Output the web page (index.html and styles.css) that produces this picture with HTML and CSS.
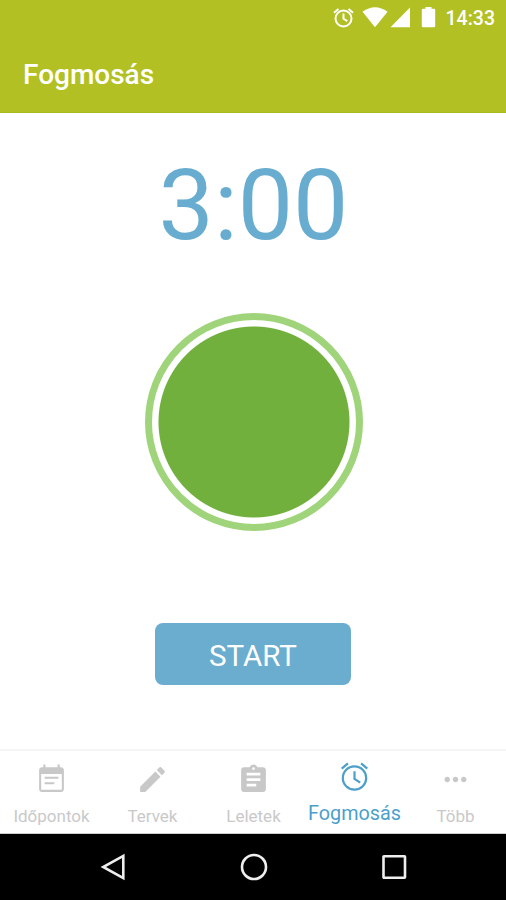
FILE: index.html
```html
<!DOCTYPE html>
<html lang="hu">
<head>
<meta charset="utf-8">
<title>Fogmosás</title>
<link rel="stylesheet" href="styles.css">
</head>
<body>
<div class="screen">
  <header class="header">
    <div class="status">
      <svg class="status-icons" width="104" height="24" viewBox="0 0 104 24" fill="#fff">
        <g fill="none" stroke="#fff" stroke-width="2">
          <circle cx="11.5" cy="12.5" r="8"/>
          <path d="M11.5 7.5v5.3l3.8 2.4M2 6.8l4.5-3.9M21 6.8l-4.5-3.9"/>
        </g>
        <path d="M30.5 5.8Q43 -3.500 55.6 5.8L43 21.2z"/>
        <path d="M78 1.6V21.2H58.5z"/>
        <path d="M91 2.8h2.500V1h6v1.8h2.500q1.200 0 1.200 1.200v16q0 1.200-1.200 1.200H91q-1.200 0-1.200-1.200V4q0-1.200 1.200-1.200z"/>
      </svg>
      <span class="clock">14:33</span>
    </div>
    <h1 class="title">Fogmosás</h1>
  </header>
  <main class="content">
    <div class="timer">3:00</div>
    <div class="ring"></div>
    <button class="start">START</button>
  </main>
  <nav class="tabs">
    <a class="tab">
      <svg class="icon" viewBox="0 0 24 24"><path d="M17 10H7v1.500h10zm2-7h-1V1h-1.600v2H7.600V1H6v2H5c-1.110 0-2 .9-2 2v14c0 1.100.89 2 2 2h14c1.100 0 2-.9 2-2V5c0-1.100-.9-2-2-2zm0 16.500H4.500V8h15v11.500zM14 14H7v1.500h7z"/></svg>
      <span class="label">Időpontok</span>
    </a>
    <a class="tab">
      <svg class="icon" viewBox="0 0 24 24"><path d="M3 17.250V21h3.750L17.810 9.940l-3.750-3.750L3 17.250zM20.710 7.040c.39-.39.39-1.020 0-1.410l-2.340-2.340c-.39-.39-1.020-.39-1.410 0l-1.830 1.830 3.750 3.750 1.830-1.830z"/></svg>
      <span class="label">Tervek</span>
    </a>
    <a class="tab">
      <svg class="icon" viewBox="0 0 24 24"><path d="M19 3h-4.180C14.400 1.840 13.300 1 12 1c-1.300 0-2.400.84-2.820 2H5c-1.100 0-2 .9-2 2v14c0 1.100.9 2 2 2h14c1.100 0 2-.9 2-2V5c0-1.100-.9-2-2-2zm-7 0c.55 0 1 .45 1 1s-.45 1-1 1-1-.45-1-1 .45-1 1-1zm2 14H7v-2h7v2zm3-4H7v-2h10v2zm0-4H7V7h10v2z"/></svg>
      <span class="label">Leletek</span>
    </a>
    <a class="tab active">
      <svg class="icon" viewBox="0 0 33 33" fill="none" stroke="#4b9fca" stroke-width="2.200"><circle cx="16.500" cy="18" r="11.700"/><path d="M16.500 11.300v7.600l5.700 3.800M3.700 8.600l6.200-5.200M29.300 8.600l-6.200-5.200"/></svg>
      <span class="label">Fogmosás</span>
    </a>
    <a class="tab">
      <svg class="icon" viewBox="0 0 24 24"><path d="M6 10c-1.100 0-2 .9-2 2s.9 2 2 2 2-.9 2-2-.9-2-2-2zm12 0c-1.100 0-2 .9-2 2s.9 2 2 2 2-.9 2-2-.9-2-2-2zm-6 0c-1.100 0-2 .9-2 2s.9 2 2 2 2-.9 2-2-.9-2-2-2z"/></svg>
      <span class="label">Több</span>
    </a>
  </nav>
  <footer class="system">
    <svg width="30" height="30" viewBox="0 0 30 30"><path d="M25.300 3.900V26.100L5.200 15z"/></svg>
    <svg width="30" height="30" viewBox="0 0 30 30"><circle cx="15" cy="15" r="12"/></svg>
    <svg width="30" height="30" viewBox="0 0 30 30"><rect x="4.500" y="4.200" width="21.500" height="21.500" rx="0.500"/></svg>
  </footer>
</div>
</body>
</html>
```
FILE: styles.css
```css
* {
  box-sizing: border-box;
}

body {
  margin: 0;
  font-family: Roboto, sans-serif;
  background: #fff;
}

.screen {
  width: 506px;
  height: 900px;
  display: flex;
  flex-direction: column;
  overflow: hidden;
}

.header {
  height: 113px;
  background: #b2c024;
  border-bottom: 1px solid #a8b722;
  color: #fff;
}

.status {
  height: 37px;
  padding: 6px 11px 0 0;
  display: flex;
  justify-content: flex-end;
  gap: 10px;
}

.clock {
  font-size: 19.500px;
  font-weight: 500;
  line-height: 26px;
}

.title {
  margin: 0;
  padding-left: 23px;
  font-size: 28px;
  font-weight: 500;
  line-height: 76px;
}

.content {
  height: 636px;
  padding-left: 1px;
  display: flex;
  flex-direction: column;
  align-items: center;
}

.timer {
  margin-top: 35px;
  height: 116px;
  font-size: 98.500px;
  line-height: 116px;
  color: #68adcf;
}

.ring {
  width: 218px;
  height: 218px;
  margin-top: 49px;
  border: 7px solid #a0d47b;
  border-radius: 50%;
  background: radial-gradient(circle closest-side, #72b03e 95px, #fff 96px);
}

.start {
  width: 196px;
  height: 62px;
  margin-top: 92px;
  margin-right: 1px;
  border: 0;
  border-radius: 8px;
  padding: 3px 0 0;
  background: #6badcf;
  color: #fff;
  font-family: inherit;
  font-size: 29.500px;
}

.tabs {
  height: 85px;
  padding-left: 1px;
  display: flex;
  border-top: 2px solid #f5f5f5;
  border-bottom: 1px solid #ccc;
}

.tab {
  flex: 1 1 0;
  display: flex;
  flex-direction: column;
  align-items: center;
  padding-top: 12px;
  color: #c9c9c9;
}

.icon {
  width: 33px;
  height: 33px;
}

.tab:not(.active) .icon {
  fill: #c8c8c8;
}

.label {
  margin-top: 10px;
  font-size: 17px;
  line-height: 20px;
}

.tab.active {
  padding-top: 9px;
  color: #4b9fca;
}

.active .label {
  margin-top: 9px;
  font-size: 19.800px;
  line-height: 24px;
}

.system {
  height: 66px;
  padding: 0 97px 0 98px;
  display: flex;
  align-items: center;
  justify-content: space-between;
  background: #000;
}

.system svg {
  fill: none;
  stroke: #eee;
  stroke-width: 2.600;
}
```
